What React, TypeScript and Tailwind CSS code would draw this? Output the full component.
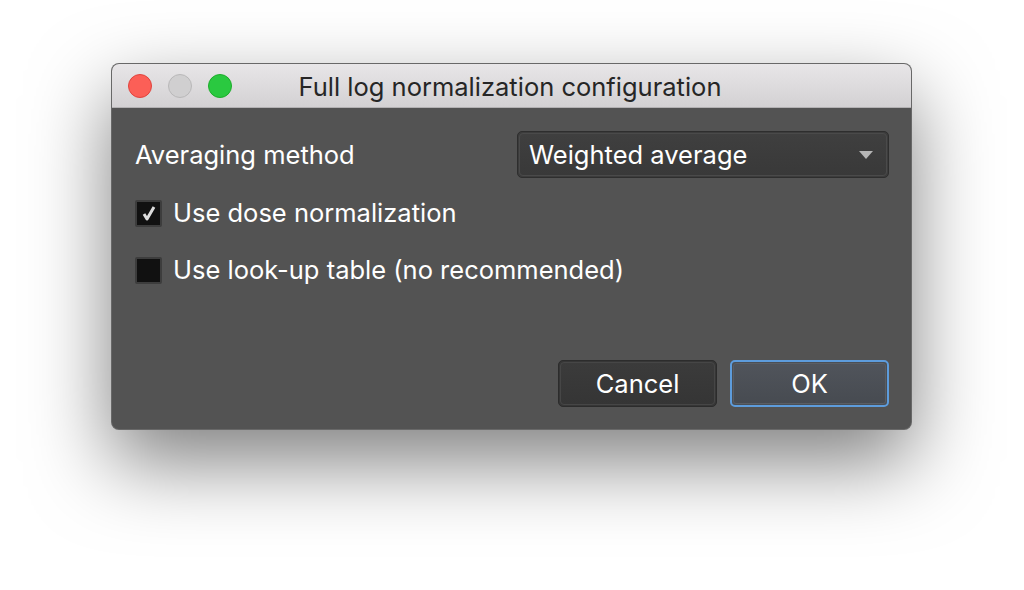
export default function App() {
  return (
    <div className="w-[1024px] h-[590px] bg-white overflow-hidden pt-[63px] pl-[111px] font-['Inter','Liberation_Sans',sans-serif]">
      <div className="w-[801px] h-[367px] rounded-[8px] overflow-hidden flex flex-col bg-[#535353] shadow-[0_32px_80px_rgba(0,0,0,0.5)] border border-[#8a8a8a]/40">
        {/* title bar */}
        <div className="h-[44px] shrink-0 flex items-center relative bg-gradient-to-b from-[#e8e6e8] to-[#d3d1d3] border-b border-[#b3b1b3]">
          <div className="flex items-center gap-[16px] pl-[16px]">
            <span className="w-[24px] h-[24px] rounded-full bg-[#fc5f57] border border-[#e0443e]" />
            <span className="w-[24px] h-[24px] rounded-full bg-[#d0cfd0] border border-[#b9b8b9]" />
            <span className="w-[24px] h-[24px] rounded-full bg-[#2ac940] border border-[#1dad2b]" />
          </div>
          <div className="absolute inset-0 flex items-center justify-center pr-[3px] pt-[3px] text-[25.5px] text-[#262626] pointer-events-none">
            Full log normalization configuration
          </div>
        </div>

        {/* body */}
        <div className="flex-1 flex flex-col pl-[23px] pr-[22px] pt-[23px] pb-[22px] text-white text-[25.5px]">
          <div className="flex items-center justify-between h-[47px]">
            <span className="pt-px">Averaging method</span>
            <div className="w-[372px] h-[47px] rounded-[5px] border border-[#2e2e2e] p-px bg-[#3c3c3c]">
              <div className="h-full rounded-[4px] border border-[#4a4a4a] bg-gradient-to-b from-[#3f3f3f] to-[#393939] flex items-center justify-between pl-[9px] pr-[12px]">
                <span className="pt-px">Weighted average</span>
                <svg width="16" height="10" viewBox="0 0 16 10">
                  <path d="M1 1 H15 L8 9 Z" fill="#b5b5b5" />
                </svg>
              </div>
            </div>
          </div>

          <label className="flex items-center gap-[11px] mt-[20px] h-[30px]">
            <span className="w-[27px] h-[27px] rounded-[2px] bg-[#111111] border-2 border-[#3d3d3d] flex items-center justify-center">
              <svg width="14" height="16" viewBox="0 0 14 16">
                <path d="M2 9 L5 14 L12 2" fill="none" stroke="#dcdcdc" strokeWidth="3" strokeLinejoin="round" />
              </svg>
            </span>
            <span>Use dose normalization</span>
          </label>

          <label className="flex items-center gap-[11px] mt-[27px] h-[30px]">
            <span className="w-[27px] h-[27px] rounded-[2px] bg-[#111111] border-2 border-[#3d3d3d]" />
            <span>Use look-up table (no recommended)</span>
          </label>

          <div className="mt-auto flex justify-end gap-[13px]">
            <button className="w-[159px] h-[47px] rounded-[5px] border border-[#2c2c2c] bg-[#363636] p-px">
              <div className="h-full pt-px rounded-[4px] border border-[#464646] bg-gradient-to-b from-[#3b3b3b] to-[#353535] flex items-center justify-center">
                Cancel
              </div>
            </button>
            <button className="w-[159px] h-[47px] rounded-[5px] border-2 border-[#5d9cdc] bg-[#4b4f55] p-px">
              <div className="h-full pt-px rounded-[3px] border border-[#5a5e64] bg-gradient-to-b from-[#50545b] to-[#474b51] flex items-center justify-center">
                OK
              </div>
            </button>
          </div>
        </div>
      </div>
    </div>
  );
}
